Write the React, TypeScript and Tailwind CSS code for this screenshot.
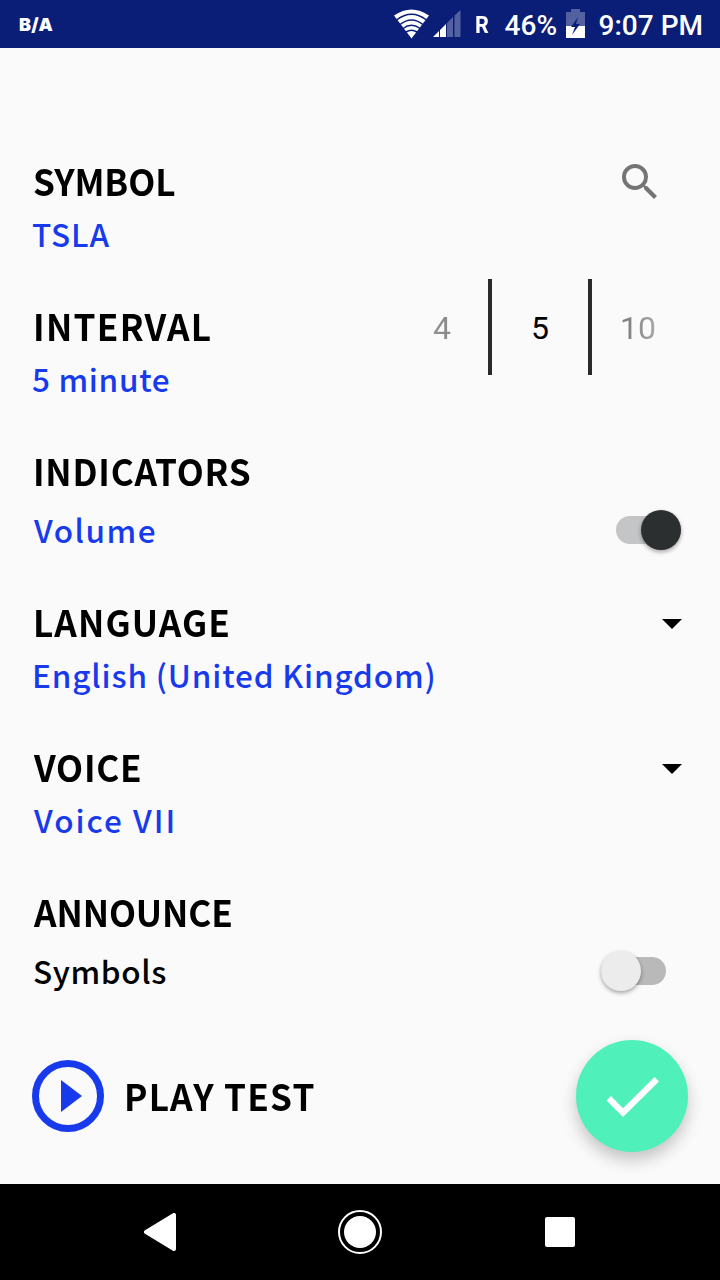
import type { ReactNode } from "react";

const heading = "flex h-12 w-max origin-left scale-x-[0.95] items-center whitespace-nowrap pb-px text-[37px] font-bold leading-none text-black";
const value = "flex h-10 items-center whitespace-nowrap pb-[3px] text-[31.5px] font-medium leading-none";

function StatusBar() {
  return (
    <header className="flex h-12 items-center justify-between bg-[#0a1e78] pl-[19px] pr-[17px] font-['Roboto',sans-serif] text-white">
      <span className="font-['Inter',sans-serif] text-[18px] font-black tracking-[0.2px]">B/A</span>
      <div className="flex items-center font-medium">
        <svg width="35" height="30" viewBox="0 0 35 30" className="mr-1">
          <path d="M0 6.5Q17.5-5.5 35 6.5L17.5 29.5Z" fill="white" />
          <g fill="none" stroke="#0a1e78" strokeWidth="1.5">
            <path d="M2.5 11Q17.5-.5 32.5 11M6 15.5Q17.5 6.5 29 15.5M9 19.5Q17.5 13 26 19.5M12 23Q17.5 19.5 23 23" />
          </g>
        </svg>
        <svg width="28" height="28" viewBox="0 0 28 28" className="mr-[14px]">
          <path d="M0 27L6 21V27ZM7 20L13 14V27H7Z" fill="white" />
          <path d="M14 13L20 7V27H14ZM21.5 5.5L27.5 0V27H21.5Z" fill="white" fillOpacity=".3" />
        </svg>
        <span className="w-[30px] pt-0.5 text-[24px] font-bold leading-none"><span className="inline-block origin-left scale-x-[0.9]">R</span></span>
        <span className="w-[61px] pt-[3px] text-[28px] leading-none tracking-[0px]">46%</span>
        <svg width="20" height="30" viewBox="0 0 20 30" className="mr-[13px]">
          <path d="M0 3H5V0H14V3H19V17H0Z" fill="white" fillOpacity=".3" />
          <path d="M0 17H19V29H0Z" fill="white" />
          <path d="M12 8L5 18H9L6 26L14 15H10Z" fill="#0a1e78" />
        </svg>
        <span className="pt-[3px] text-[28px] leading-none">9:07 PM</span>
      </div>
    </header>
  );
}

function Section({ height, children, control }: { height: string; children: ReactNode; control?: ReactNode }) {
  return (
    <section className={`flex items-start justify-between ${height}`}>
      <div>{children}</div>
      {control}
    </section>
  );
}

function Caret() {
  return (
    <svg width="20" height="10" viewBox="0 0 20 10" className="mr-[38px] mt-[21px] shrink-0">
      <path d="M0 0H20L10 10Z" />
    </svg>
  );
}

export default function App() {
  return (
    <div className="flex h-[1280px] w-[720px] flex-col overflow-hidden bg-[#fafafa] font-['Noto_Sans_CJK_JP',sans-serif]">
      <StatusBar />
      <main className="flex flex-1 flex-col pt-[109px]">
        <Section
          height="h-[145px]"
          control={
            <svg width="48" height="48" viewBox="0 0 24 24" className="mr-14 mt-px" fill="#757575">
              <path d="M15.5 14h-.79l-.28-.27A6.471 6.471 0 0 0 16 9.5 6.5 6.5 0 1 0 9.5 16c1.61 0 3.09-.59 4.23-1.57l.27.28v.79l5 4.99L20.49 19l-4.99-5zm-6 0C7.01 14 5 11.99 5 9.5S7.01 5 9.5 5 14 7.01 14 9.5 11.99 14 9.5 14z" />
            </svg>
          }
        >
          <h2 className={`${heading} ml-[33px] tracking-[-0.1px]`}>SYMBOL</h2>
          <p className={`${value} ml-8 mt-[10px] tracking-[0.9px] text-[#183aed]`}>TSLA</p>
        </Section>
        <Section
          height="h-[145px]"
          control={
            <div className="-mt-[23px] mr-8 flex h-24 items-center font-['Roboto',sans-serif] text-[32px]">
              <span className="w-24 bg-linear-to-r from-[#a5a5a5] to-[#777] bg-clip-text pl-1 pt-0.5 text-center text-transparent">4</span>
              <span className="h-24 w-1 bg-[#292929]" />
              <span className="w-24 pt-0.5 text-center text-black">5</span>
              <span className="h-24 w-1 bg-[#292929]" />
              <span className="w-24 bg-linear-to-r from-[#555] to-[#d5d5d5] bg-clip-text pr-1 pt-0.5 text-center text-transparent">10</span>
            </div>
          }
        >
          <h2 className={`${heading} ml-[33px] tracking-[1.35px]`}>INTERVAL</h2>
          <p className={`${value} ml-8 mt-[10px] tracking-[0.7px] text-[#183aed]`}>5 minute</p>
        </Section>
        <Section
          height="h-[151px]"
          control={
            <div role="switch" aria-checked="true" className="mr-[39px] mt-[69px] flex h-7 w-[65px] items-center justify-end rounded-full bg-[#c4c5c7]">
              <span className="h-10 w-10 shrink-0 rounded-full bg-[#2b2f30] shadow-[0_2px_4px_rgba(0,0,0,0.35)]" />
            </div>
          }
        >
          <h2 className={`${heading} ml-[33px] tracking-[0.8px]`}>INDICATORS</h2>
          <p className={`${value} ml-[34px] mt-4 tracking-[1.5px] text-[#183aed]`}>Volume</p>
        </Section>
        <Section height="h-[145px]" control={<Caret />}>
          <h2 className={`${heading} ml-[33px] tracking-[1.2px]`}>LANGUAGE</h2>
          <p className={`${value} ml-8 mt-[10px] tracking-[0.85px] text-[#183aed]`}>English (United Kingdom)</p>
        </Section>
        <Section height="h-[145px]" control={<Caret />}>
          <h2 className={`${heading} ml-[34px] tracking-[0.8px]`}>VOICE</h2>
          <p className={`${value} ml-[34px] mt-[10px] tracking-[2px] text-[#183aed]`}>Voice VII</p>
        </Section>
        <Section
          height="h-[151px]"
          control={
            <div role="switch" aria-checked="false" className="mr-[54px] mt-[69px] flex h-7 w-[65px] items-center rounded-full bg-[#b9b9b9]">
              <span className="h-10 w-10 shrink-0 rounded-full bg-[#ececec] shadow-[0_2px_4px_rgba(0,0,0,0.35)]" />
            </div>
          }
        >
          <h2 className={`${heading} ml-[34px] tracking-[-0.1px]`}>ANNOUNCE</h2>
          <p className={`${value} ml-[33px] mt-4 tracking-[0.6px] text-black`}>Symbols</p>
        </Section>
        <div className="flex h-[114px] items-center px-8">
          <svg width="72" height="72" viewBox="0 0 72 72">
            <circle cx="36" cy="36" r="32.5" fill="none" stroke="#183aed" strokeWidth="7" />
            <path d="M29 20V52L50 36Z" fill="#183aed" />
          </svg>
          <span className={`${heading} ml-5 tracking-[1.3px]`}>PLAY TEST</span>
          <button className="ml-auto h-28 w-28 rounded-full bg-[#50f0ba] shadow-[0_8px_16px_rgba(0,0,0,0.22)]">
            <svg width="112" height="112" viewBox="0 0 112 112">
              <path d="M30.5 60.5L35 56L47 68.3L78.5 37L83 41.5L47 77Z" fill="white" />
            </svg>
          </button>
        </div>
      </main>
      <nav className="flex h-24 items-center bg-black pl-36">
        <svg width="33" height="38" viewBox="0 0 33 38">
          <path d="M2 19L30 2V36Z" fill="white" stroke="white" strokeWidth="4" strokeLinejoin="round" />
        </svg>
        <svg width="44" height="44" viewBox="0 0 44 44" className="ml-[161px]">
          <circle cx="22" cy="22" r="21" fill="none" stroke="white" strokeWidth="2" />
          <circle cx="22" cy="22" r="16" fill="white" />
        </svg>
        <span className="ml-[163px] h-[30px] w-[30px] rounded-[2px] bg-white" />
      </nav>
    </div>
  );
}
